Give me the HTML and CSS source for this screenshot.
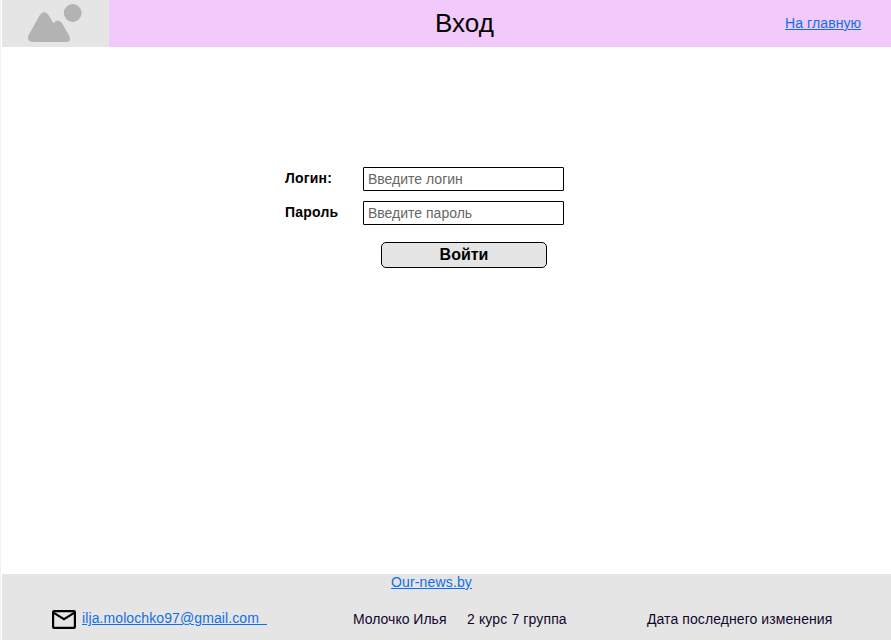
FILE: index.html
```html
<!DOCTYPE html>
<html lang="ru">
<head>
<meta charset="utf-8">
<title>Вход</title>
<link rel="stylesheet" href="styles.css">
</head>
<body>
<div class="page">
  <header class="header">
    <div class="logo">
      <svg width="107" height="47" viewBox="0 0 107 47" fill="#b3b3b3" aria-hidden="true">
        <circle cx="70.7" cy="13" r="8.9"/>
        <path d="M26.4 35.5 37.5 15.5Q42.2 8.5 46.8 15.5L51.5 23.2Q55.8 17.8 60 23.2L67.4 36Q69.500 42 64 42H31.5Q24 42 26.4 35.5Z"/>
      </svg>
    </div>
    <h1 class="title">Вход</h1>
    <a class="link home" href="#">На главную</a>
  </header>
  <main class="main">
    <form class="form">
      <label class="label" for="login">Логин:</label>
      <input class="input" id="login" type="text" placeholder="Введите логин">
      <label class="label" for="password">Пароль</label>
      <input class="input" id="password" type="password" placeholder="Введите пароль">
      <button class="button" type="button">Войти</button>
    </form>
  </main>
  <footer class="footer">
    <a class="link site" href="#">Our-news.by</a>
    <div class="info">
      <svg class="mail" width="24" height="20" viewBox="0 0 24 20" fill="none" stroke="#000" stroke-width="2.2" aria-hidden="true">
        <rect x="1.1" y="1.1" width="21.8" height="16.800" rx="1"/>
        <path d="M1.5 2.600 12 9.300 22.500 2.600"/>
      </svg>
      <a class="link email" href="#">ilja.molochko97@gmail.com&nbsp;&nbsp;</a>
      <span class="author">Молочко Илья</span>
      <span class="group">2 курс 7 группа</span>
      <span class="date">Дата последнего изменения</span>
    </div>
  </footer>
</div>
</body>
</html>
```

FILE: styles.css
```css
* { box-sizing: border-box; }
body { margin: 0; font: 14px/16px "Liberation Sans", Arial, sans-serif; color: #000; background: #fff; }
.page { height: 640px; display: flex; flex-direction: column; padding-left: 1px; border-left: 1px solid #f2f2f2; background: #fff; overflow: hidden; }
.link { color: #1070e8; text-decoration: underline; }
.header { height: 47px; flex: none; display: grid; grid-template-columns: 107px 1fr 106px; background: #f1c9fa; }
.logo { height: 47px; background: #e5e5e5; }
.logo svg { display: block; }
.title { margin: 8px 0 0 326px; font-size: 26px; line-height: 30px; font-weight: 400; }
.home { justify-self: start; margin-top: 15px; white-space: nowrap; letter-spacing: 0.1px; }
.main { flex: 1; padding: 120px 0 0 283px; }
.form { display: grid; grid-template-columns: 78px 201px; row-gap: 10px; }
.label { padding-top: 3px; font-weight: 700; letter-spacing: 0.2px; }
.input { width: 201px; height: 24px; padding: 0 4px; border: 1px solid #000; border-radius: 1px; background: #fff; font: inherit; }
.input::placeholder { color: #666; opacity: 1; }
.button { grid-column: 2; width: 166px; height: 26px; margin: 7px 0 0 18px; padding: 0; border: 1px solid #000; border-radius: 5px; background: #e5e5e5; color: #000; font: 700 16px/18px "Liberation Sans", Arial, sans-serif; }
.footer { height: 66px; flex: none; background: #e5e5e5; }
.site { display: block; width: max-content; margin-left: 389px; letter-spacing: 0.15px; }
.info { display: grid; grid-template-columns: 30px 271px 114px 180px 1fr; margin: 20px 0 0 50px; white-space: nowrap; color: #13062e; }
.email { justify-self: start; height: 16px; letter-spacing: 0.1px; }
.author, .group, .date { margin-top: 1px; }
.group { letter-spacing: 0.13px; }
.date { letter-spacing: 0.08px; }
```
